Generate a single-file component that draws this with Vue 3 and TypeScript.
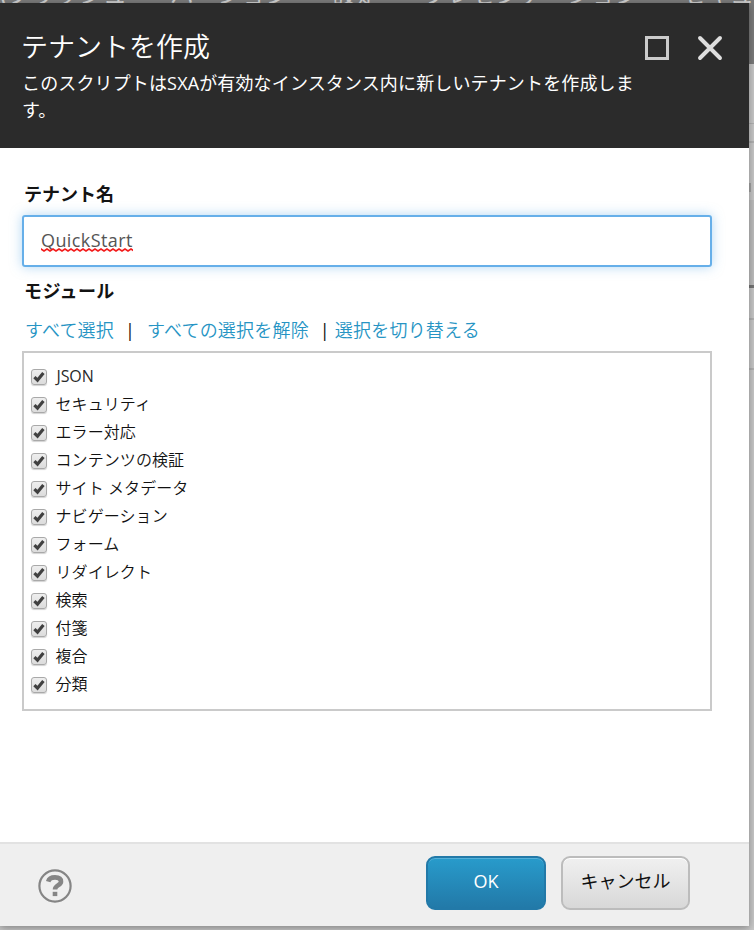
<script setup lang="ts">
import { ref } from 'vue'

interface ModuleOption {
  label: string
  checked: boolean
}

const menu: string[] = ['パブリッシュ', 'バージョン', '設定', 'プレゼンテーション', 'セキュリティ']

const tenantName = ref('QuickStart')

const modules = ref<ModuleOption[]>(
  [
    'JSON',
    'セキュリティ',
    'エラー対応',
    'コンテンツの検証',
    'サイト メタデータ',
    'ナビゲーション',
    'フォーム',
    'リダイレクト',
    '検索',
    '付箋',
    '複合',
    '分類',
  ].map((label) => ({ label, checked: true })),
)

function isLatin(label: string): boolean {
  return /^[A-Za-z]+$/.test(label)
}

function setAll(value: boolean): void {
  modules.value.forEach((m) => (m.checked = value))
}

function invert(): void {
  modules.value.forEach((m) => (m.checked = !m.checked))
}
</script>

<template>
  <div class="desktop">
    <nav class="ribbon">
      <span v-for="item in menu" :key="item">{{ item }}</span>
    </nav>
    <div class="edge">
      <i class="line l1"></i>
      <i class="line l2"></i>
      <i class="line l3"></i>
      <i class="line l4"></i>
      <i class="line l5"></i>
      <i class="line l6"></i>
      <i class="line l7"></i>
    </div>

    <section class="dialog">
      <header class="head">
        <div class="titles">
          <h1>テナントを作成</h1>
          <p>このスクリプトはSXAが有効なインスタンス内に新しいテナントを作成します。</p>
        </div>
        <div class="controls">
          <svg class="max" width="24" height="24" viewBox="0 0 24 24">
            <rect x="1.5" y="1.5" width="21" height="21" fill="none" stroke="#cbcbcb" stroke-width="3" />
          </svg>
          <svg class="close" width="26" height="26" viewBox="0 0 26 26">
            <path d="M3 3L23 23M23 3L3 23" fill="none" stroke="#dedede" stroke-width="3.9" stroke-linecap="round" />
          </svg>
        </div>
      </header>

      <main class="body">
        <label class="label" for="tenant">テナント名</label>
        <div id="tenant" class="input"><span>{{ tenantName }}</span>
          <svg class="squiggle" width="92" height="4" viewBox="0 0 92 4">
            <defs>
              <pattern id="wave" width="6" height="4" patternUnits="userSpaceOnUse">
                <path d="M-3 3L0 1L3 3L6 1L9 3" fill="none" stroke="#f21b1b" stroke-width="1.6" />
              </pattern>
            </defs>
            <rect width="92" height="4" fill="url(#wave)" />
          </svg>
        </div>
        <div class="label second">モジュール</div>
        <div class="links">
          <a @click="setAll(true)">すべて選択</a>
          <b class="bar first">|</b>
          <a @click="setAll(false)">すべての選択を解除</a>
          <b class="bar last">|</b>
          <a @click="invert">選択を切り替える</a>
        </div>
        <ul class="list">
          <li v-for="m in modules" :key="m.label" @click="m.checked = !m.checked">
            <span class="box">
              <svg v-if="m.checked" width="12" height="12" viewBox="0 0 12 12">
                <path d="M1.4 6.2L4.5 9.2L10.4 2" fill="none" stroke="#404040" stroke-width="3.2" />
              </svg>
            </span>
            <span class="name" :class="{ latin: isLatin(m.label) }">{{ m.label }}</span>
          </li>
        </ul>
      </main>

      <footer class="foot">
        <svg class="help" width="34" height="34" viewBox="0 0 34 34">
          <circle cx="17" cy="17" r="15.6" fill="none" stroke="#858585" stroke-width="2.2" />
          <path d="M10.2 12.6C11 9.6 13.7 8.4 17 8.4C20.9 8.4 23 10.1 23 12.7C23 16.3 17 16.1 17 20.6" fill="none" stroke="#858585" stroke-width="4.6" />
          <rect x="14.7" y="22.8" width="4.6" height="4.3" fill="#858585" />
        </svg>
        <button class="btn ok">OK</button>
        <button class="btn cancel">キャンセル</button>
      </footer>
    </section>
  </div>
</template>

<style>
body {
  margin: 0;
}
</style>

<style scoped>
.desktop {
  position: relative;
  width: 754px;
  height: 930px;
  overflow: hidden;
  background: #c8c8c8;
  font-family: 'Open Sans', 'Noto Sans CJK JP', sans-serif;
  box-sizing: border-box;
  padding-top: 3px;
}

.ribbon {
  position: absolute;
  inset: 0 0 auto 0;
  height: 64px;
  background: #7b7b7b;
  display: flex;
  gap: 43px;
  overflow: hidden;
}

.ribbon span {
  flex: none;
  font-size: 24px;
  line-height: 24px;
  margin-top: -18px;
  height: 24px;
  color: #d0d0d0;
  font-weight: 400;
}

.ribbon span:first-child {
  margin-left: -17px;
}

.edge {
  position: absolute;
  left: 749px;
  top: 64px;
  width: 5px;
  height: 866px;
}

.line {
  position: absolute;
  left: 0;
  width: 5px;
  height: 2px;
  background: #b2b2b2;
}

.l1 { top: 59px; height: 1px; }
.l2 { top: 77px; }
.l3 { top: 119px; width: 2px; height: 9px; background: #a4a4a4; }
.l4 { top: 136px; height: 85px; background: #bebebe; }
.l5 { top: 221px; height: 3px; background: #767676; }
.l6 { top: 254px; }
.l7 { top: 304px; }

.dialog {
  position: relative;
  display: flex;
  flex-direction: column;
  width: 749px;
  height: 923px;
  background: #fff;
  box-shadow: 0 2px 8px rgba(0, 0, 0, 0.35);
}

.head {
  display: flex;
  justify-content: space-between;
  box-sizing: border-box;
  height: 145px;
  padding: 26px 26px 0 21px;
  background: #2b2b2b;
  color: #fff;
}

.titles {
  width: 620px;
}

h1 {
  margin: 0;
  font-size: 27px;
  line-height: 36px;
  font-weight: 350;
}

p {
  margin: 5px 0 0 1px;
  font-size: 18px;
  line-height: 27px;
  font-weight: 400;
  letter-spacing: 0.14px;
}

.controls {
  display: flex;
  gap: 28px;
  padding-top: 7px;
}

.close {
  margin-top: -1px;
}

.body {
  flex: 1;
  display: flex;
  flex-direction: column;
  padding: 32px 37px 0 22px;
}

.label {
  height: 28px;
  padding-left: 2px;
  font-size: 18px;
  line-height: 28px;
  font-weight: 700;
  color: #131313;
}

.input {
  position: relative;
  box-sizing: border-box;
  height: 52px;
  margin-top: 7px;
  padding-left: 17px;
  border: 2px solid #66afe9;
  border-radius: 3px;
  box-shadow: 0 0 12px rgba(102, 175, 233, 0.5);
  font-size: 18px;
  line-height: 46px;
  letter-spacing: 0.4px;
  color: #555;
}

.squiggle {
  position: absolute;
  left: 17px;
  top: 31px;
}

.second {
  margin-top: 10px;
  letter-spacing: 0.4px;
}

.links {
  display: flex;
  height: 28px;
  margin-top: 11px;
  padding-left: 3px;
  font-size: 18px;
  line-height: 28px;
  letter-spacing: 0.2px;
  white-space: nowrap;
}

.links a {
  color: #2694c4;
  font-weight: 350;
  cursor: pointer;
}

.bar {
  width: 10px;
  text-align: center;
  color: #111;
  font-weight: 400;
}

.first {
  margin: 0 12px 0 11px;
}

.last {
  margin: 0 5px 0 11px;
}

.list {
  box-sizing: border-box;
  height: 360px;
  margin: 7px 0 0;
  padding: 9px 7px;
  border: 2px solid #cacaca;
  list-style: none;
}

.list li {
  display: flex;
  align-items: center;
  height: 28px;
  font-size: 16px;
  line-height: 28px;
  color: #111;
}

.box {
  display: flex;
  align-items: center;
  justify-content: center;
  box-sizing: border-box;
  width: 16px;
  height: 16px;
  margin: 1px 8.5px 0 0;
  border: 1px solid #a9a9a9;
  border-radius: 3px;
  background: linear-gradient(#eee, #dcdcdc);
  box-shadow: 0 1px 1px rgba(0, 0, 0, 0.18);
}

.name {
  font-weight: 350;
  letter-spacing: 0.08px;
}

.latin {
  padding-left: 1px;
  font-weight: 400;
  letter-spacing: -0.1px;
  color: #2a2a2a;
}

.foot {
  display: flex;
  align-items: flex-start;
  box-sizing: border-box;
  height: 84px;
  padding: 12px 59px 0 38px;
  border-top: 2px solid #e2e2e2;
  background: #efefef;
}

.help {
  margin: 13px auto 0 0;
}

.btn {
  box-sizing: border-box;
  height: 54px;
  padding: 0 0 4px;
  border-radius: 9px;
  font-family: inherit;
  font-size: 18px;
  line-height: 28px;
}

.ok {
  width: 120px;
  margin-right: 15px;
  border: 2px solid #2279a8;
  background: linear-gradient(#289bcb, #2279a8);
  box-shadow: inset 0 1px #55b0d8;
  color: #fff;
}

.cancel {
  width: 129px;
  border: 2px solid #bcbcbc;
  background: linear-gradient(#f0f0f0, #d8d8d8);
  box-shadow: inset 0 1px #fff;
  color: #111;
}
</style>
